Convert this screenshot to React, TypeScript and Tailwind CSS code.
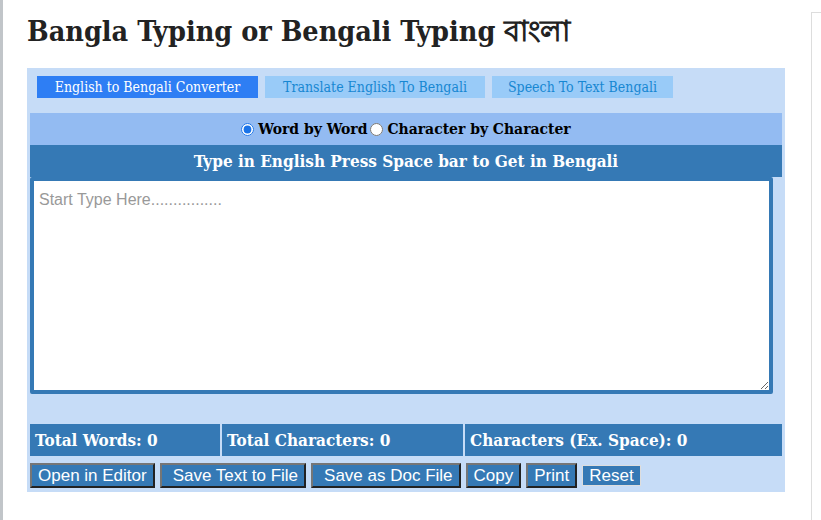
import { useState } from "react";

const serif = "font-['DejaVu_Serif_Condensed','DejaVu_Serif',serif]";

const tabs = [
  { label: "English to Bengali Converter", active: true, w: "w-[221px]" },
  { label: "Translate English To Bengali", active: false, w: "w-[220px]" },
  { label: "Speech To Text Bengali", active: false, w: "w-[181px]" },
];

const stats = [
  { label: "Total Words: 0", w: "w-[190px]" },
  { label: "Total Characters: 0", w: "w-[241px]" },
  { label: "Characters (Ex. Space): 0", w: "flex-1" },
];

const buttons = [
  { label: "Open in Editor", cls: "px-[6px]" },
  { label: "Save Text to File", cls: "pl-[11px] pr-[6px] ml-[5px]" },
  { label: "Save as Doc File", cls: "pl-[11px] pr-[6px] ml-[5px]" },
  { label: "Copy", cls: "px-[6px] ml-[5px]" },
  { label: "Print", cls: "px-[6px] ml-[5px]" },
];

export default function App() {
  const [mode, setMode] = useState("word");
  const [text, setText] = useState("");

  return (
    <div className="flex min-h-[520px] w-[821px] border-l-[3px] border-[#c1c5c9] bg-white">
      <div className="ml-[24px] w-[758px]">
        <h1 className={`${serif} pt-[12px] text-[28.5px] leading-[38px] font-semibold text-[#222]`}>
          Bangla Typing or Bengali Typing বাংলা
        </h1>

        <div className="mt-[18px] bg-[#c6dcf7] px-[3px] pt-[8px] pb-[4px]">
          <div className="flex gap-[7px] pl-[7px]">
            {tabs.map((t) => (
              <div
                key={t.label}
                className={`${serif} ${t.w} h-[22px] text-center text-[14px] leading-[22px] ${
                  t.active ? "bg-[#2e7ef4] text-white" : "bg-[#99cbf8] text-[#1787d2]"
                }`}
              >
                {t.label}
              </div>
            ))}
          </div>

          <div
            className={`${serif} mt-[15px] flex h-[32px] items-center justify-center bg-[#93bbf2] text-[15.5px] font-semibold text-black`}
          >
            <label className="flex items-center">
              <input
                type="radio"
                name="mode"
                checked={mode === "word"}
                onChange={() => setMode("word")}
                className="mr-[4px] h-[13px] w-[13px] accent-[#1a73e8]"
              />
              Word by Word
            </label>
            <label className="ml-[3px] flex items-center">
              <input
                type="radio"
                name="mode"
                checked={mode === "char"}
                onChange={() => setMode("char")}
                className="mr-[4px] h-[13px] w-[13px]"
              />
              Character by Character
            </label>
          </div>

          <div
            className={`${serif} h-[32px] bg-[#3579b5] text-center text-[17px] leading-[32px] font-semibold text-white`}
          >
            Type in English Press Space bar to Get in Bengali
          </div>

          <textarea
            value={text}
            onChange={(e) => setText(e.target.value)}
            placeholder="Start Type Here................"
            className="block h-[217px] w-[743px] rounded-[2px] border-4 border-[#3579b5] bg-white px-[5px] py-[7px] font-['Liberation_Sans',Arial,sans-serif] text-[16px] text-[#333] outline-none placeholder:text-[#999]"
          />

          <div className="mt-[30px] flex gap-[2px]">
            {stats.map((s) => (
              <div
                key={s.label}
                className={`${serif} ${s.w} h-[32px] bg-[#3579b5] pl-[5px] text-[17px] leading-[32px] font-bold text-white`}
              >
                {s.label}
              </div>
            ))}
          </div>

          <div className="mt-[7px] flex items-center">
            {buttons.map((b) => (
              <button
                key={b.label}
                type="button"
                className={`${b.cls} h-[25px] border-2 border-t-[#767676] border-l-[#767676] border-r-[#222] border-b-[#222] bg-[#3579b5] font-['Liberation_Sans',Arial,sans-serif] text-[17px] leading-[20px] text-white`}
              >
                {b.label}
              </button>
            ))}
            <button
              type="button"
              className="ml-[5px] h-[21px] border border-[#ddd] bg-[#3579b5] px-[6px] font-['Liberation_Sans',Arial,sans-serif] text-[17px] leading-[19px] text-white"
            >
              Reset
            </button>
          </div>
        </div>
      </div>

      <div className="mt-[12px] ml-[26px] w-[10px] border-t border-l border-[#ddd]" />
    </div>
  );
}
